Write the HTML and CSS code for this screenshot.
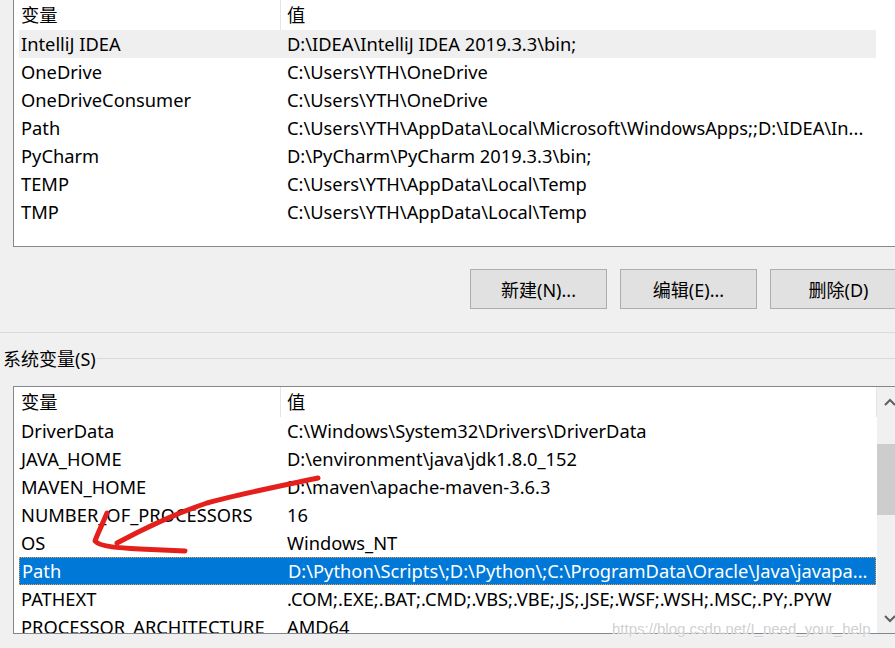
FILE: index.html
```html
<!DOCTYPE html>
<html lang="zh-CN">
<head>
  <meta charset="UTF-8">
  <title>环境变量</title>
  <link rel="stylesheet" href="styles.css">
</head>
<body>
  <!-- 用户变量 -->
  <div class="list list-user">
    <div class="list-head">
      <span class="cell name">变量</span>
      <span class="cell value">值</span>
    </div>
    <div class="row hover"><span class="cell name">IntelliJ IDEA</span><span class="cell value">D:\IDEA\IntelliJ IDEA 2019.3.3\bin;</span></div>
    <div class="row"><span class="cell name">OneDrive</span><span class="cell value">C:\Users\YTH\OneDrive</span></div>
    <div class="row"><span class="cell name">OneDriveConsumer</span><span class="cell value">C:\Users\YTH\OneDrive</span></div>
    <div class="row"><span class="cell name">Path</span><span class="cell value">C:\Users\YTH\AppData\Local\Microsoft\WindowsApps;;D:\IDEA\In...</span></div>
    <div class="row"><span class="cell name">PyCharm</span><span class="cell value">D:\PyCharm\PyCharm 2019.3.3\bin;</span></div>
    <div class="row"><span class="cell name">TEMP</span><span class="cell value">C:\Users\YTH\AppData\Local\Temp</span></div>
    <div class="row"><span class="cell name">TMP</span><span class="cell value">C:\Users\YTH\AppData\Local\Temp</span></div>
  </div>

  <div class="buttons">
    <button class="btn">新建(N)...</button>
    <button class="btn">编辑(E)...</button>
    <button class="btn">删除(D)</button>
  </div>

  <div class="sep"></div>

  <div class="group-title"><span>系统变量(S)</span></div>

  <!-- 系统变量 -->
  <div class="list list-sys">
    <div class="list-body">
      <div class="list-head">
        <span class="cell name">变量</span>
        <span class="cell value">值</span>
      </div>
      <div class="row"><span class="cell name">DriverData</span><span class="cell value">C:\Windows\System32\Drivers\DriverData</span></div>
      <div class="row"><span class="cell name">JAVA_HOME</span><span class="cell value">D:\environment\java\jdk1.8.0_152</span></div>
      <div class="row"><span class="cell name">MAVEN_HOME</span><span class="cell value">D:\maven\apache-maven-3.6.3</span></div>
      <div class="row"><span class="cell name">NUMBER_OF_PROCESSORS</span><span class="cell value">16</span></div>
      <div class="row"><span class="cell name">OS</span><span class="cell value">Windows_NT</span></div>
      <div class="row selected"><span class="cell name">Path</span><span class="cell value">D:\Python\Scripts\;D:\Python\;C:\ProgramData\Oracle\Java\javapa...</span></div>
      <div class="row"><span class="cell name">PATHEXT</span><span class="cell value">.COM;.EXE;.BAT;.CMD;.VBS;.VBE;.JS;.JSE;.WSF;.WSH;.MSC;.PY;.PYW</span></div>
      <div class="row"><span class="cell name">PROCESSOR_ARCHITECTURE</span><span class="cell value">AMD64</span></div>
    </div>
    <div class="scrollbar">
      <svg class="scroll-arrow" width="26" height="30" viewBox="0 0 26 30">
        <polyline points="8,18 13,13 18,18" fill="none" stroke="#606060" stroke-width="2"/>
      </svg>
      <div class="scroll-track"><div class="scroll-thumb"></div></div>
      <svg class="scroll-arrow" width="26" height="30" viewBox="0 0 26 30">
        <polyline points="8,13 13,18 18,13" fill="none" stroke="#606060" stroke-width="2"/>
      </svg>
    </div>
  </div>

  <!-- 红色箭头标注 -->
  <svg class="mark" width="895" height="648" viewBox="0 0 895 648">
    <path d="M318 478 C 280 486, 235 495, 207 503 C 180 512, 145 528, 117 543" fill="none" stroke="#e3201b" stroke-width="5" stroke-linecap="round"/>
    <path d="M107 513 C 102 525, 97 535, 95 541 C 100 547, 120 548, 140 549 L 185 551" fill="none" stroke="#e3201b" stroke-width="5" stroke-linecap="round" stroke-linejoin="round"/>
  </svg>

  <div class="watermark">https://blog.csdn.net/I_need_your_help</div>
</body>
</html>
```

FILE: styles.css
```css
html, body {
  margin: 0;
  overflow: hidden;
}
body {
  width: 895px;
  height: 648px;
  position: relative;
  background-color: #f0f0f0;
  font-family: "Noto Sans", "Noto Sans CJK SC", sans-serif;
  font-size: 18.3px;
  color: #000;
}

/* list views */
.list {
  box-sizing: border-box;
  width: 892px;
  height: 248px;
  margin-left: 13px;
  border: 1px solid #828790;
  background-color: #fff;
  overflow: hidden;
}
.list-user {
  margin-top: -1px;
}
.list-head {
  display: flex;
  height: 30px;
  align-items: center;
  padding-left: 5px;
}
.list-head .value {
  align-self: stretch;
  display: flex;
  align-items: center;
  border-left: 1px solid #e5e5e5;
  border-right: 1px solid #e5e5e5;
  width: 588px;
  padding-left: 6px;
}
.row {
  display: flex;
  height: 28px;
  align-items: center;
  margin-left: 5px;
  width: 857px;
  white-space: nowrap;
  box-sizing: border-box;
}
.cell {
  line-height: 28px;
  white-space: nowrap;
  overflow: hidden;
}
.name {
  width: 261px;
  padding-left: 2px;
  box-sizing: border-box;
  flex-shrink: 0;
}
.value {
  padding-left: 7px;
  flex: 1;
}
.row.hover {
  background-color: #efefef;
}
.row.selected {
  background-color: #0078d7;
  color: #fff;
  border: 1px dotted #f0a040;
}

/* buttons */
.buttons {
  display: flex;
  gap: 13px;
  margin-top: 22px;
  padding-left: 470px;
}
.btn {
  flex-shrink: 0;
  width: 137px;
  height: 40px;
  background-color: #e1e1e1;
  border: 1px solid #adadad;
  font-family: inherit;
  font-size: 18px;
  color: #000;
  padding: 0;
}

.sep {
  height: 1px;
  margin-top: 23px;
  background-color: #dadada;
}

.group-title {
  display: flex;
  align-items: center;
  height: 26px;
  margin-top: 12px;
  padding-left: 3px;
  font-size: 18px;
}
.group-title span {
  padding-right: 1px;
}
.group-title::after {
  content: "";
  flex: 1;
  height: 1px;
  background-color: #dadada;
}

.list-sys {
  margin-top: 15px;
  display: flex;
}
.list-sys .list-body {
  width: 863px;
  flex-shrink: 0;
}

/* scrollbar */
.scrollbar {
  width: 26px;
  display: flex;
  flex-direction: column;
  background-color: #f0f0f0;
  flex-shrink: 0;
}
.scroll-arrow {
  display: block;
}
.scroll-track {
  flex: 1;
  padding-top: 27px;
}
.scroll-thumb {
  height: 71px;
  background-color: #cdcdcd;
}

/* overlays */
.mark {
  position: absolute;
  left: 0;
  top: 0;
  pointer-events: none;
}
.watermark {
  position: absolute;
  left: 612px;
  top: 619px;
  font-family: "Liberation Sans", Arial, sans-serif;
  font-size: 15px;
  line-height: 20px;
  color: rgba(195, 195, 195, 0.8);
  text-shadow: 0 0 2px #fff, 0 0 1px #fff;
  white-space: nowrap;
}
```
